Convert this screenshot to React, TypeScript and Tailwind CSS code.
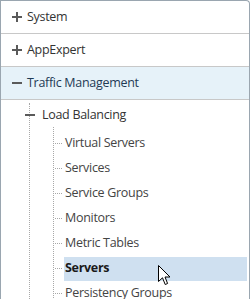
import React from 'react';

const topItems = [
    { label: 'System', open: false },
    { label: 'AppExpert', open: false },
    { label: 'Traffic Management', open: true },
];

const lbChildren = ['Virtual Servers', 'Services', 'Service Groups', 'Monitors', 'Metric Tables', 'Servers', 'Persistency Groups'];

const Plus: React.FC = () => (
    <svg width="10" height="10" viewBox="0 0 10 10" className="shrink-0">
        <rect x="0" y="4" width="10" height="2" fill="#5a5a5a" />
        <rect x="4" y="0" width="2" height="10" fill="#5a5a5a" />
    </svg>
);

const Minus: React.FC = () => (
    <svg width="10" height="10" viewBox="0 0 10 10" className="shrink-0">
        <rect x="0" y="4" width="10" height="2" fill="#5a5a5a" />
    </svg>
);

const Cursor: React.FC = () => (
    <svg width="13" height="21" viewBox="0 0 13 21" className="absolute left-[158px] top-[265px]">
        <path d="M0.5 0.5 L0.5 16.5 L4.5 12.8 L7.2 19.5 L9.6 18.5 L7 12 L12 12 Z" fill="#fff" stroke="#000" strokeWidth="1" strokeLinejoin="miter" />
    </svg>
);

export default function App() {
    return (
        <div className="relative w-[250px] h-[299px] overflow-hidden bg-white font-['Open_Sans',sans-serif] text-[12.5px] tracking-[-0.3px] text-[#333]">
            <div className="w-[250px] h-[299px] border-l border-t border-r border-[#9aa6b0] rounded-tr-[4px]">
                {topItems.map((item) => (
                    <div
                        key={item.label}
                        className={`h-[33px] flex items-center gap-[5px] pl-[11px] border-b border-[#c8c8c8] ${item.open ? 'bg-[#e6f2f9] text-[#1f3a55]' : ''}`}
                    >
                        {item.open ? <Minus /> : <Plus />}
                        <span>{item.label}</span>
                    </div>
                ))}

                {/* tree under Traffic Management */}
                <div className="ml-[28px] border-l border-dotted border-[#a8a8a8] h-[200px]">
                    <div className="h-[24px] flex items-center -ml-[5px] mt-[3px]">
                        <Minus />
                        <span className="ml-[7px]">Load Balancing</span>
                    </div>
                    <div className="ml-[23px] border-l border-dotted border-[#a8a8a8] pt-[4px]">
                        {lbChildren.map((c) => (
                            <div key={c} className="h-[25px] flex items-center">
                                <div className="w-[7px] ml-[1px] border-t border-dotted border-[#a8a8a8]" />
                                <div className={`flex-1 h-[24px] flex items-center ml-[2px] mr-[2px] pl-[1px] ${c === 'Servers' ? 'bg-[#cfe0f0] font-bold text-[#1a1a1a]' : 'text-[#444]'}`}>
                                    {c}
                                </div>
                            </div>
                        ))}
                    </div>
                </div>
            </div>
            <Cursor />
        </div>
    );
}
